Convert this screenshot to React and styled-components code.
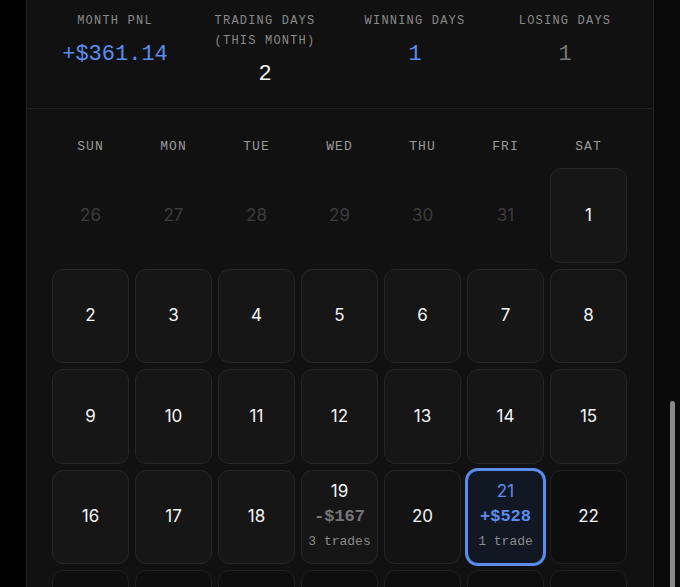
import styled, { createGlobalStyle, css } from "styled-components";

/** 월간 트레이딩 캘린더 */

const GlobalStyle = createGlobalStyle`
    html, body {
        margin: 0;
        padding: 0;
        background-color: #000;
        overflow: hidden;
    }
    * {
        box-sizing: border-box;
    }
`;

const MONO = `"Liberation Mono", "DejaVu Sans Mono", monospace`;
const SANS = `Inter, "Noto Sans", sans-serif`;
const BLUE = '#5b8def';

/**화면 전체 틀*/
const Screen = styled.div`
    display: flex;
    height: 587px;
    padding-left: 26px;
    overflow: hidden;
`;

/**가운데 패널 */
const Panel = styled.div`
    width: 628px;
    flex-shrink: 0;
    background-color: #111111;
    border-left: 1px solid #222;
    border-right: 1px solid #222;
`;

/**오른쪽 스크롤 영역 */
const ScrollTrack = styled.div`
    flex: 1;
    position: relative;
    background-color: #0a0a0a;
`;

const ScrollThumb = styled.div`
    position: absolute;
    left: 16px;
    top: 401px;
    width: 5px;
    height: 220px;
    border-radius: 3px;
    background-color: #8a8a8a;
`;

const StatsRow = styled.div`
    display: grid;
    grid-template-columns: repeat(4, 1fr);
    padding: 11px 13px 0;
    height: 109px;
    border-bottom: 1px solid #242424;
`;

const Stat = styled.div`
    display: flex;
    flex-direction: column;
    align-items: center;
    text-align: center;
`;

const StatLabel = styled.div`
    font-family: ${MONO};
    font-size: 12px;
    line-height: 20px;
    letter-spacing: 1.2px;
    color: #8a8a8a;
    text-transform: uppercase;
`;

const StatValue = styled.div`
    margin-top: 9px;
    font-family: ${MONO};
    font-size: 22px;
    line-height: 30px;
    color: ${({ $tone }) => ($tone === 'blue' ? BLUE : $tone === 'gray' ? '#777' : '#f2f2f2')};
`;

const CalendarBlock = styled.div`
    padding: 28px 25px 0 25px;
`;

const Grid = styled.div`
    display: grid;
    grid-template-columns: repeat(7, 77px);
    column-gap: 6px;
    row-gap: 6px;
`;

const WeekDay = styled.div`
    text-align: center;
    font-family: ${MONO};
    font-size: 13px;
    line-height: 20px;
    letter-spacing: 1px;
    color: #9a9a9a;
    margin-bottom: 5px;
`;

const Cell = styled.div`
    height: 94.5px;
    border-radius: 11px;
    display: flex;
    flex-direction: column;
    align-items: center;
    justify-content: center;
    border: 1px solid #262626;
    background-color: #161616;

    ${({ $kind }) => $kind === 'outside' && css`
        border-color: transparent;
        background-color: transparent;
    `}
    ${({ $kind }) => $kind === 'later' && css`
        border-color: #1f1f1f;
        background-color: #0e0e0e;
    `}
    ${({ $kind }) => $kind === 'dim' && css`
        background-color: #131313;
    `}
    ${({ $kind }) => $kind === 'selected' && css`
        border-color: ${BLUE};
        background-color: #111823;
        box-shadow: 0 0 0 2px ${BLUE};
    `}
`;

const DayNum = styled.div`
    font-family: ${SANS};
    font-size: 17px;
    line-height: 25px;
    color: ${({ $kind }) => ($kind === 'outside' ? '#3c3c3c' : $kind === 'selected' ? BLUE : '#f4f4f4')};
`;

const DayPnl = styled.div`
    font-family: ${MONO};
    font-weight: 700;
    font-size: 17px;
    line-height: 25px;
    color: ${({ $win }) => ($win ? BLUE : '#767676')};
`;

const DayTrades = styled.div`
    font-family: ${MONO};
    font-size: 13px;
    line-height: 25px;
    color: #8a8a8a;
`;

const stats = [
    { label: 'Month PnL', value: '+$361.14', tone: 'blue' },
    { label: <>Trading days<br />(this month)</>, value: '2', tone: 'white' },
    { label: 'Winning days', value: '1', tone: 'blue' },
    { label: 'Losing days', value: '1', tone: 'gray' },
];

const weekDays = ['SUN', 'MON', 'TUE', 'WED', 'THU', 'FRI', 'SAT'];

const trades = {
    19: { pnl: '-$167', count: '3 trades', win: false },
    21: { pnl: '+$528', count: '1 trade', win: true },
};

const days = [
    ...[26, 27, 28, 29, 30, 31].map((d) => ({ day: d, kind: 'outside' })),
    ...Array.from({ length: 31 }, (_, i) => {
        const d = i + 1;
        let kind = 'normal';
        if (d === 21) kind = 'selected';
        else if (d === 20) kind = 'dim';
        else if (d > 21) kind = 'later';
        return { day: d, kind, trade: trades[d] };
    }),
    ...[1, 2, 3, 4].map((d) => ({ day: d, kind: 'later' })),
];

const App = () => {
    return (
        <>
            <GlobalStyle />
            <Screen>
                <Panel>
                    <StatsRow>
                        {stats.map((s, i) => (
                            <Stat key={i}>
                                <StatLabel>{s.label}</StatLabel>
                                <StatValue $tone={s.tone}>{s.value}</StatValue>
                            </Stat>
                        ))}
                    </StatsRow>
                    <CalendarBlock>
                        <Grid>
                            {weekDays.map((w) => (
                                <WeekDay key={w}>{w}</WeekDay>
                            ))}
                            {days.map((d, i) => (
                                <Cell key={i} $kind={d.kind}>
                                    <DayNum $kind={d.kind}>{d.day}</DayNum>
                                    {d.trade && <DayPnl $win={d.trade.win}>{d.trade.pnl}</DayPnl>}
                                    {d.trade && <DayTrades>{d.trade.count}</DayTrades>}
                                </Cell>
                            ))}
                        </Grid>
                    </CalendarBlock>
                </Panel>
                <ScrollTrack>
                    <ScrollThumb />
                </ScrollTrack>
            </Screen>
        </>
    );
};

export default App;
